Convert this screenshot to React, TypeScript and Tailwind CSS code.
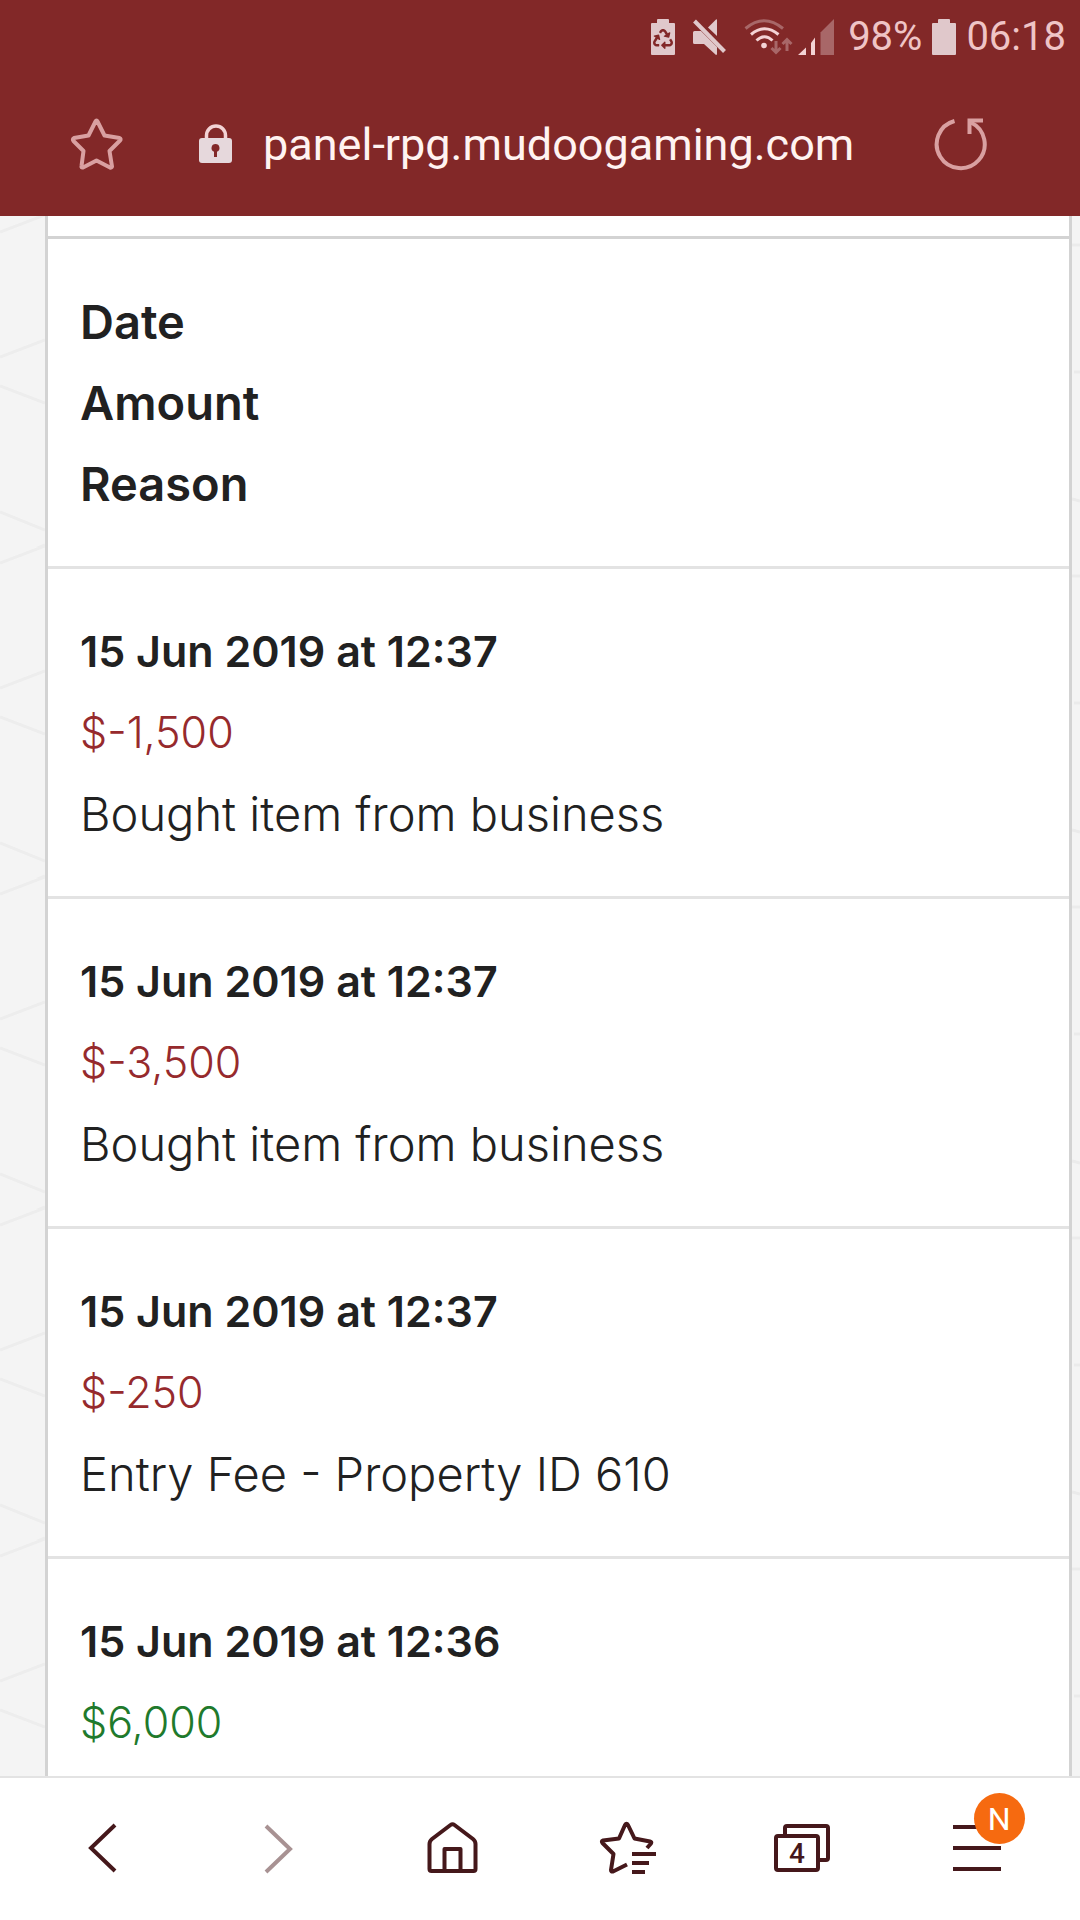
import { FaRecycle } from "react-icons/fa";

const headings = ["Date", "Amount", "Reason"];

const transactions = [
  {
    id: 1,
    date: "15 Jun 2019 at 12:37",
    amount: "$-1,500",
    reason: "Bought item from business",
  },
  {
    id: 2,
    date: "15 Jun 2019 at 12:37",
    amount: "$-3,500",
    reason: "Bought item from business",
  },
  {
    id: 3,
    date: "15 Jun 2019 at 12:37",
    amount: "$-250",
    reason: "Entry Fee - Property ID 610",
  },
  { id: 4, date: "15 Jun 2019 at 12:36", amount: "$6,000", reason: "" },
];

const rowClass = "block border-b-3 border-[#e3e3e3] py-[42px] pl-8";
const cellClass = "block text-left leading-[81px]";

const BatteryShape = () => (
  <path d="M6 1q0-1 1-1h10q1 0 1 1v3h5q1 0 1 1v30q0 1-1 1H1q-1 0-1-1V5q0-1 1-1h5z" />
);

const StatusBar = () => {
  return (
    <div className="flex h-[74px] items-center justify-end pr-[14px] text-[40px] text-[#efc4c6]">
      <div className="flex items-center gap-[18px] text-[#e0c8cb]">
        <svg width="24" height="36" fill="currentColor">
          <BatteryShape />
          <FaRecycle x="2" y="10" size={20} color="#822828" />
        </svg>
        <svg width="33" height="36" fill="currentColor">
          <path d="M0 13.5q0-1.5 1.5-1.5H8L24 28v7q0 1-1 1L11 25H1.5Q0 25 0 23.5z" />
          <path d="M15 8.5 23 .5q1-.5 1 .5v16z" />
          <path d="M1.5 2 31.5 32.5" stroke="currentColor" strokeWidth="4" />
        </svg>
        <div className="flex items-center gap-1">
          <svg
            width="50"
            height="36"
            fill="none"
            stroke="#f3d3d5"
            strokeWidth="3"
          >
            <path d="M1.500 9.500Q20-6 39 9.500" stroke="#a86768" />
            <path d="M7 15.500Q20.500 4 34.500 15.500" />
            <path d="M12.500 21.500Q20.500 14 28.500 21.500" />
            <circle cx="20" cy="26.500" r="2.800" fill="#f3d3d5" stroke="none" />
            <path
              d="M32 22v11M27.500 29l4.500 4.500 4.500-4.500M43 32V21M38.500 25l4.500-4.500 4.500 4.500"
              stroke="#a86768"
            />
          </svg>
          <svg width="36" height="36" fill="#f3d3d5">
            <path d="M0 36l8-7.500V36zM13 24l4-5.500V36h-4z" />
            <path d="M22.500 13.500 36 0v36H22.500z" fill="#a86768" />
          </svg>
        </div>
      </div>
      <div className="flex items-center gap-[10px] pl-[14px]">
        <span>98%</span>
        <svg width="24" height="36" fill="#e0c8cb">
          <BatteryShape />
        </svg>
        <span>06:18</span>
      </div>
    </div>
  );
};

const AddressBar = () => {
  return (
    <div className="flex h-[142px] items-center pr-[92px] pb-[2px] pl-[70px]">
      <button aria-label="Bookmark" className="text-[#d9a0a1]">
        <svg
          width="54"
          height="54"
          fill="none"
          stroke="currentColor"
          strokeWidth="4"
          strokeLinejoin="round"
        >
          <path d="M25.500 4.500Q26.500 2.500 27.500 4.500L34.500 18.500 49.500 21Q51.500 22 50 23.500L39.500 34 42 49.500Q41.500 51 40 50.500L26.500 43.500 13 50.500Q11 51 11.500 49L13.500 34 3.500 24Q2 22 4 21L18.500 18.500z" />
        </svg>
      </button>
      <svg width="34" height="40" className="ml-[75px]" fill="#e6d8dc">
        <path
          d="M7.500 15V11.500a9.500 9.500 0 0 1 19 0V15"
          fill="none"
          stroke="#f3d3d5"
          strokeWidth="3.500"
        />
        <rect y="14" width="33" height="25" rx="3" />
        <path
          d="M16.500 20a4 4 0 0 1 1.500 7.700V33h-3v-5.300A4 4 0 0 1 16.500 20z"
          fill="#822828"
        />
      </svg>
      <input
        type="text"
        aria-label="Address"
        defaultValue="panel-rpg.mudoogaming.com"
        className="ml-[30px] min-w-0 flex-1 bg-transparent pt-[2px] text-[45px] text-[#fff3f1] outline-none"
      />
      <button aria-label="Reload" className="text-[#d9a0a1]">
        <svg
          width="54"
          height="54"
          fill="none"
          stroke="currentColor"
          strokeWidth="4"
        >
          <path d="M20.500 4A24 24 0 1 0 37 5.500" />
          <path d="M49 3.500H35.500v13.500" />
        </svg>
      </button>
    </div>
  );
};

const LeftGutter = () => (
  <svg className="h-full w-[45px] shrink-0">
    <pattern id="mesh" width="45" height="331" patternUnits="userSpaceOnUse">
      <path
        d="M0 16 45-1M0 141l45-17M0 170l45 17M0 296l45 18M0 347l45-18"
        fill="none"
        stroke="#ededed"
        strokeWidth="3"
      />
    </pattern>
    <rect width="100%" height="100%" fill="url(#mesh)" />
  </svg>
);

const RightGutter = () => (
  <svg className="h-full w-2 shrink-0">
    <pattern id="edge" width="8" height="331" patternUnits="userSpaceOnUse">
      <path
        d="M0 29h8M2 156h6M0 283l8 2"
        fill="none"
        stroke="#ebebeb"
        strokeWidth="3"
      />
    </pattern>
    <rect width="100%" height="100%" fill="url(#edge)" />
  </svg>
);

const TransactionTable = () => {
  return (
    <table className="block text-[43px] text-[#212121]">
      <thead className="block">
        <tr className={rowClass}>
          {headings.map((heading) => (
            <th
              key={heading}
              className={cellClass + " text-[47px] font-semibold"}
            >
              {heading}
            </th>
          ))}
        </tr>
      </thead>
      <tbody className="block">
        {transactions.map((item) => (
          <tr key={item.id} className={rowClass}>
            <td className={cellClass + " font-semibold"}>{item.date}</td>
            <td
              className={
                cellClass +
                " font-light " +
                (item.amount.includes("-") ? "text-[#962a2d]" : "text-[#1f7a2c]")
              }
            >
              {item.amount}
            </td>
            {item.reason && (
              <td className={cellClass + " text-[47px] font-light"}>
                {item.reason}
              </td>
            )}
          </tr>
        ))}
      </tbody>
    </table>
  );
};

const BottomNav = () => {
  const icon = {
    width: 64,
    height: 64,
    fill: "none",
    stroke: "currentColor",
    strokeWidth: 4,
  };

  return (
    <nav className="grid h-36 shrink-0 grid-cols-6 items-center justify-items-center border-t-2 border-[#e3e3e3] bg-white px-4 text-[#45181b]">
      <button aria-label="Back">
        <svg {...icon}>
          <path d="M44 8 20 31l24 23" />
        </svg>
      </button>
      <button aria-label="Forward" className="text-[#a89293]">
        <svg {...icon}>
          <path d="M20 9l24 23-24 23" />
        </svg>
      </button>
      <button aria-label="Home">
        <svg {...icon} strokeLinejoin="round">
          <path d="M8.500 27Q8.500 24 11 22L29.500 8Q31.500 6.500 33.500 8L52 22Q54.500 24 54.500 27V52q0 2-2 2h-42q-2 0-2-2z" />
          <path d="M23.500 54V32h16v22" />
        </svg>
      </button>
      <button aria-label="Bookmarks">
        <svg {...icon} strokeLinejoin="round">
          <path d="M52 31l4-4.500Q57 25 55 24.500L39.500 21.500 33 8Q31.500 5.500 30 8L24 21.500 8 23.500Q6 24 7.500 26L18.500 37 16 53Q16 55 18 54.500L32 47.500" />
          <path d="M37 37h24M37 46h17M37 55h13" />
        </svg>
      </button>
      <button aria-label="Tabs">
        <svg {...icon}>
          <path d="M15 19V11q0-2 2-2h39q2 0 2 2v30q0 2-2 2h-8" />
          <rect x="6" y="19" width="42" height="34" rx="2" />
          <text
            x="27"
            y="46"
            textAnchor="middle"
            fill="currentColor"
            stroke="none"
            className="text-[28px] font-medium"
          >
            4
          </text>
        </svg>
      </button>
      <button aria-label="Menu" className="relative">
        <svg {...icon}>
          <path d="M8 10h48M8 31h48M8 52h48" />
        </svg>
        <span className="absolute -top-6 -right-4 flex size-[51px] items-center justify-center rounded-full bg-[#f66a10] text-[32px] text-white">
          N
        </span>
      </button>
    </nav>
  );
};

export default function App() {
  return (
    <div className="flex h-screen flex-col overflow-hidden bg-[#f4f4f4] font-['Roboto',sans-serif]">
      <header className="shrink-0 bg-[#822828]">
        <StatusBar />
        <AddressBar />
      </header>
      <main className="flex min-h-0 flex-1 overflow-hidden">
        <LeftGutter />
        <section className="min-w-0 flex-1 border-x-3 border-[#d3d3d3] bg-white font-['Inter',sans-serif]">
          <div className="h-[23px] border-b-3 border-[#d3d3d3]" />
          <TransactionTable />
        </section>
        <RightGutter />
      </main>
      <BottomNav />
    </div>
  );
}
